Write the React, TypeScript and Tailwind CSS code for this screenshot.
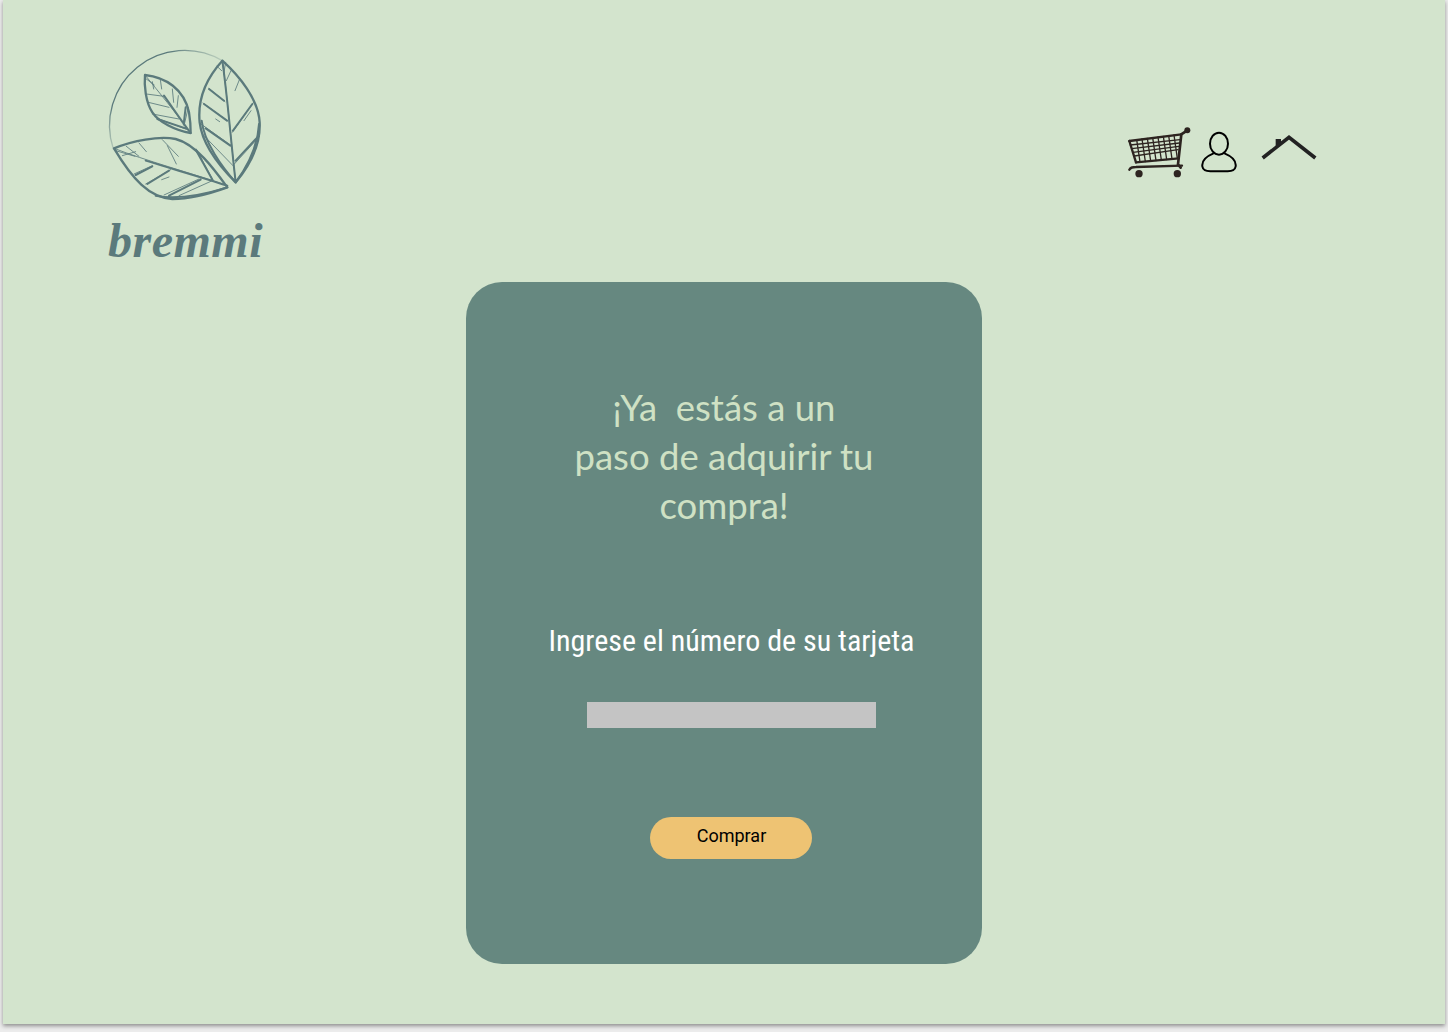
const green = "#5b7a7c";

// veins are drawn in the zoomed crop's coordinates (3x), hence the 570x510 viewBox
const leafOutlines = [
  "M400 65C350 120 325 180 332 250C340 320 400 390 440 430C490 370 515 310 512 250C508 180 450 110 400 65Z",
  "M168 108C230 115 285 150 300 220C305 250 305 270 305 282C260 275 210 250 190 220C170 190 165 140 168 108Z",
  "M75 328C130 305 210 290 260 300C320 315 375 390 415 445C360 465 300 480 250 480C180 475 130 420 75 328Z",
];

const leafThin = [
  "M400 65C415 170 425 300 440 430",
  "M168 108C210 160 260 220 305 282",
  "M75 328C170 365 300 400 415 440",
  "M410 70L404 105M398 95L384 82M426 95L412 125M452 120L438 155M360 148L408 188M342 192L416 246M495 188L430 280M336 255L424 318M512 292L436 375M340 285L432 380M380 240L392 248M486 215L465 245",
  "M172 120L196 138M190 128L194 150M214 122L218 150M172 165L225 172M178 190L240 205M190 225L270 240M250 150L254 190M268 170L264 205M298 205L285 260M210 240L295 272",
  "M80 335L138 352M100 350L140 338M112 322L150 352M150 312L172 338M220 302L268 352M235 320L262 375M135 405L190 380M170 435L245 392M225 468L330 420M270 470L370 425M322 330L370 420M218 422L240 414",
];

const leafHeavy = [
  "M400 65C415 170 425 300 440 430M345 195L414 245M350 268L424 320M432 275L490 195M440 365L505 295M360 150L405 185M338 245C345 310 400 385 440 430M510 255C505 330 470 390 440 430",
  "M205 240L290 268M290 205L284 255M225 170C250 205 280 250 305 282",
  "M140 408L190 382M240 470L335 422M322 335L372 425M175 435L240 395M170 365C250 390 340 415 415 440M200 470C270 485 350 465 415 445",
];

function Logo() {
  return (
    <svg width="190" height="170" viewBox="0 0 570 510" fill="none" strokeLinecap="round" strokeLinejoin="round">
      <defs>
        <linearGradient id="ring" x1="60" y1="330" x2="400" y2="60" gradientUnits="userSpaceOnUse">
          <stop offset="0" stopColor={green} stopOpacity="0.2" />
          <stop offset="0.2" stopColor={green} />
          <stop offset="0.75" stopColor={green} />
          <stop offset="1" stopColor={green} stopOpacity="0.2" />
        </linearGradient>
      </defs>
      <path d="M400 65A225 225 0 0 0 73 330" stroke="url(#ring)" strokeWidth="4" />
      {leafOutlines.map((d) => (
        <path key={d} d={d} stroke={green} strokeWidth="7" />
      ))}
      {leafThin.map((d) => (
        <path key={d} d={d} stroke={green} strokeWidth="3" opacity="0.85" />
      ))}
      {leafHeavy.map((d) => (
        <path key={d} d={d} stroke={green} strokeWidth="6" />
      ))}
    </svg>
  );
}

function CartIcon() {
  const rows = [70, 82, 94, 106];
  const cols = [50, 66, 82, 98, 114, 130, 146, 162];
  return (
    <svg width="64" height="54" viewBox="0 0 192 162" fill="none" stroke="#2d2420" strokeLinecap="round">
      <circle cx="178" cy="10" r="9" fill="#2d2420" stroke="none" />
      <path d="M178 10L160 22L150 112L158 122" strokeWidth="8" />
      <path d="M4 42L160 22M24 106L152 94" strokeWidth="7" />
      <path d="M4 42L24 106" strokeWidth="7" />
      {rows.map((y, i) => (
        <path key={y} d={`M${7 + i * 4} ${y - 16 - i}L${156 - i * 2} ${y - 32 - i * 2}`} strokeWidth="4" />
      ))}
      {cols.map((x, i) => (
        <path key={x} d={`M${x - 24} ${38 - i * 2}L${x - 14} ${105 - i * 1.5}`} strokeWidth="4" />
      ))}
      <path d="M4 128C8 120 14 120 24 120L162 116" strokeWidth="7" />
      <circle cx="33" cy="140" r="11" fill="#2d2420" stroke="none" />
      <circle cx="148" cy="140" r="11" fill="#2d2420" stroke="none" />
    </svg>
  );
}

function UserIcon() {
  return (
    <svg width="36" height="42" viewBox="0 0 108 126" fill="none" stroke="#000" strokeWidth="6" strokeLinecap="round">
      <ellipse cx="54" cy="38" rx="27" ry="33" />
      <path d="M36 68C12 78 2 90 4 106C6 118 14 120 28 121L80 121C94 120 102 118 104 106C106 90 96 78 72 68" />
    </svg>
  );
}

function HomeIcon() {
  return (
    <svg width="56" height="26" viewBox="0 0 168 78" fill="none" stroke="#222" strokeWidth="11">
      <path d="M5 72L84 10L163 72" />
      <path d="M44 44L44 15L60 15L60 32" fill="#222" stroke="none" />
    </svg>
  );
}

export default function App() {
  return (
    <div className="w-[1448px] h-[1032px] bg-[#ececec] overflow-hidden">
      <div className="ml-[3px] w-[1442px] h-[1024px] bg-[#d3e4cd] shadow-[0_2px_4px_rgba(0,0,0,0.4)]">
        <header className="h-[282px] flex items-start justify-between pl-[86px] pr-[128px]">
          <div className="pt-[39px] flex flex-col">
            <Logo />
            <div className="h-[60px] pl-[19px] -mt-1 font-['Liberation_Serif',serif] italic font-bold text-[48px] leading-[72px] text-[#5b7a7c] tracking-[0.5px]">
              bremmi
            </div>
          </div>
          <div className="pt-[124px] flex items-center gap-[9px]">
            <div className="mt-[3px]">
              <CartIcon />
            </div>
            <div className="-mt-[2px]">
              <UserIcon />
            </div>
            <div className="ml-[15px] -mt-3">
              <HomeIcon />
            </div>
          </div>
        </header>

        <main className="mx-auto w-[516px] h-[682px] rounded-[36px] bg-[#668880] pt-[101px] flex flex-col items-center">
          <h1 className="font-['Lato',sans-serif] font-normal text-[36.5px] leading-[49px] text-[#cfe1c4] text-center whitespace-pre">
            {"¡Ya  estás a un\npaso de adquirir tu\ncompra!"}
          </h1>
          <div className="mt-[91px] pl-[15px] flex flex-col items-center">
            <p className="font-['Roboto',sans-serif] [font-stretch:75%] text-[30px] leading-10 text-white whitespace-nowrap">
              Ingrese el número de su tarjeta
            </p>
            <input type="text" aria-label="Número de tarjeta" className="mt-[41px] block w-[289px] h-[26px] bg-[#c4c4c4]" />
            <button className="mt-[89px] w-[162px] h-[42px] pb-1 rounded-full bg-[#eec373] font-['Roboto',sans-serif] text-lg leading-6 text-black">
              Comprar
            </button>
          </div>
        </main>
      </div>
    </div>
  );
}
